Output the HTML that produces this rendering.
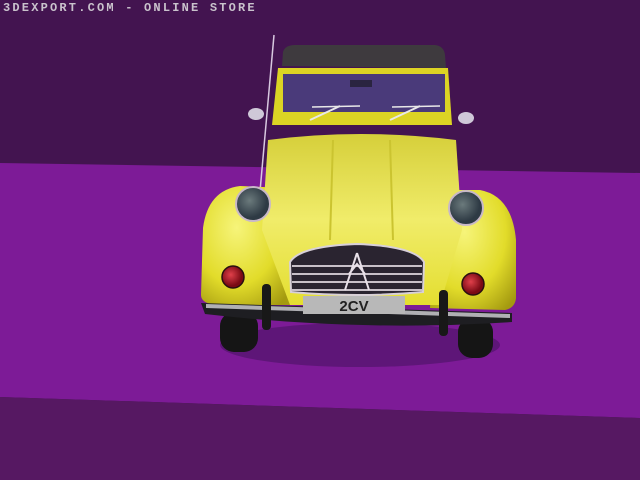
<!DOCTYPE html>
<html><head><meta charset="utf-8"><style>
html,body{margin:0;padding:0;width:640px;height:480px;overflow:hidden;background:#431450}
svg{display:block}
.t{position:absolute;left:3px;top:1px;color:#c9c2cc;font:bold 12px "Liberation Mono",monospace;letter-spacing:2.2px}
</style></head><body>
<svg width="640" height="480" viewBox="0 0 640 480">
<defs>
<radialGradient id="y" cx="0.4" cy="0.35" r="0.8"><stop offset="0" stop-color="#f6f47a"/><stop offset="0.6" stop-color="#e2dc2a"/><stop offset="1" stop-color="#a49a10"/></radialGradient>
<linearGradient id="h" x1="0" y1="0" x2="0" y2="1"><stop offset="0" stop-color="#d6cf3a"/><stop offset="0.5" stop-color="#f0ec6a"/><stop offset="1" stop-color="#e4de30"/></linearGradient>
<radialGradient id="hl" cx="0.4" cy="0.4"><stop offset="0" stop-color="#6b7a7c"/><stop offset="1" stop-color="#2e3a44"/></radialGradient>
<radialGradient id="rl" cx="0.4" cy="0.4"><stop offset="0" stop-color="#e0404a"/><stop offset="1" stop-color="#7a0a14"/></radialGradient>
</defs>
<rect width="640" height="480" fill="#431450"/>
<polygon points="0,163 640,173 640,418 0,397" fill="#7d1b97"/>
<polygon points="0,397 640,418 640,480 0,480" fill="#561862"/>
<ellipse cx="360" cy="345" rx="140" ry="22" fill="#5e1678"/>
<line x1="274" y1="35" x2="257" y2="225" stroke="#d8c8e0" stroke-width="1.5"/>
<path d="M282,66 L283,52 Q285,45 295,45 L435,45 Q444,46 445,55 L446,68 Z" fill="#3e3a3e"/>
<path d="M278,68 L448,68 L452,125 L272,125 Z" fill="#dcd424"/>
<rect x="283" y="74" width="162" height="38" fill="#4a3a7a"/>
<rect x="350" y="80" width="22" height="7" fill="#2a2440"/>
<line x1="310" y1="120" x2="340" y2="106" stroke="#e8e8e8" stroke-width="2"/>
<line x1="312" y1="107" x2="360" y2="106" stroke="#e8e8e8" stroke-width="1.5"/>
<line x1="390" y1="120" x2="420" y2="106" stroke="#e8e8e8" stroke-width="2"/>
<line x1="392" y1="107" x2="440" y2="106" stroke="#e8e8e8" stroke-width="1.5"/>
<ellipse cx="256" cy="114" rx="8" ry="6" fill="#cfc8d8"/>
<ellipse cx="466" cy="118" rx="8" ry="6" fill="#cfc8d8"/>
<path d="M201,295 L203,228 Q208,190 240,186 L285,188 L290,305 L215,305 Q201,303 201,295 Z" fill="url(#y)"/>
<path d="M430,308 L436,190 L480,190 Q512,196 516,240 L516,298 Q515,308 505,310 Z" fill="url(#y)"/>
<path d="M268,140 Q360,128 456,140 L462,230 L440,305 L290,305 L262,230 Z" fill="url(#h)"/>
<line x1="333" y1="140" x2="330" y2="240" stroke="#cbc430" stroke-width="2"/>
<line x1="390" y1="140" x2="393" y2="240" stroke="#cbc430" stroke-width="2"/>
<circle cx="253" cy="204" r="17" fill="url(#hl)" stroke="#c8b8c8" stroke-width="2"/>
<circle cx="466" cy="208" r="17" fill="url(#hl)" stroke="#c8b8c8" stroke-width="2"/>
<circle cx="233" cy="277" r="11" fill="url(#rl)" stroke="#2a1010" stroke-width="1.5"/>
<circle cx="473" cy="284" r="11" fill="url(#rl)" stroke="#2a1010" stroke-width="1.5"/>
<path d="M290,262 Q300,246 357,244 Q414,246 424,262 L423,292 Q357,298 291,292 Z" fill="#2a2430" stroke="#d8d0d8" stroke-width="2"/>
<g stroke="#c8c0c8" stroke-width="2">
<line x1="292" y1="266" x2="422" y2="266"/><line x1="292" y1="274" x2="422" y2="274"/>
<line x1="292" y1="282" x2="422" y2="282"/><line x1="292" y1="290" x2="422" y2="290"/>
</g>
<path d="M357,253 L345,290 M357,253 L369,290 M349,274 L357,264 L365,274" stroke="#e8e0e8" stroke-width="2" fill="none"/>
<rect x="220" y="312" width="38" height="40" rx="14" fill="#151515"/>
<rect x="458" y="318" width="35" height="40" rx="14" fill="#151515"/>
<path d="M201,303 L512,313 L512,322 Q360,332 205,314 Z" fill="#1e1e22"/>
<path d="M206,304 L510,314 L510,318 L206,308 Z" fill="#b0b0b4"/>
<rect x="303" y="296" width="102" height="18" fill="#b8b8b8"/>
<text x="354" y="311" text-anchor="middle" font-family="Liberation Sans,sans-serif" font-weight="bold" font-size="15" fill="#222">2CV</text>
<rect x="262" y="284" width="9" height="46" rx="4" fill="#181818"/>
<rect x="439" y="290" width="9" height="46" rx="4" fill="#181818"/>
</svg>
<div class="t">3DEXPORT.COM - ONLINE STORE</div>
</body></html>
